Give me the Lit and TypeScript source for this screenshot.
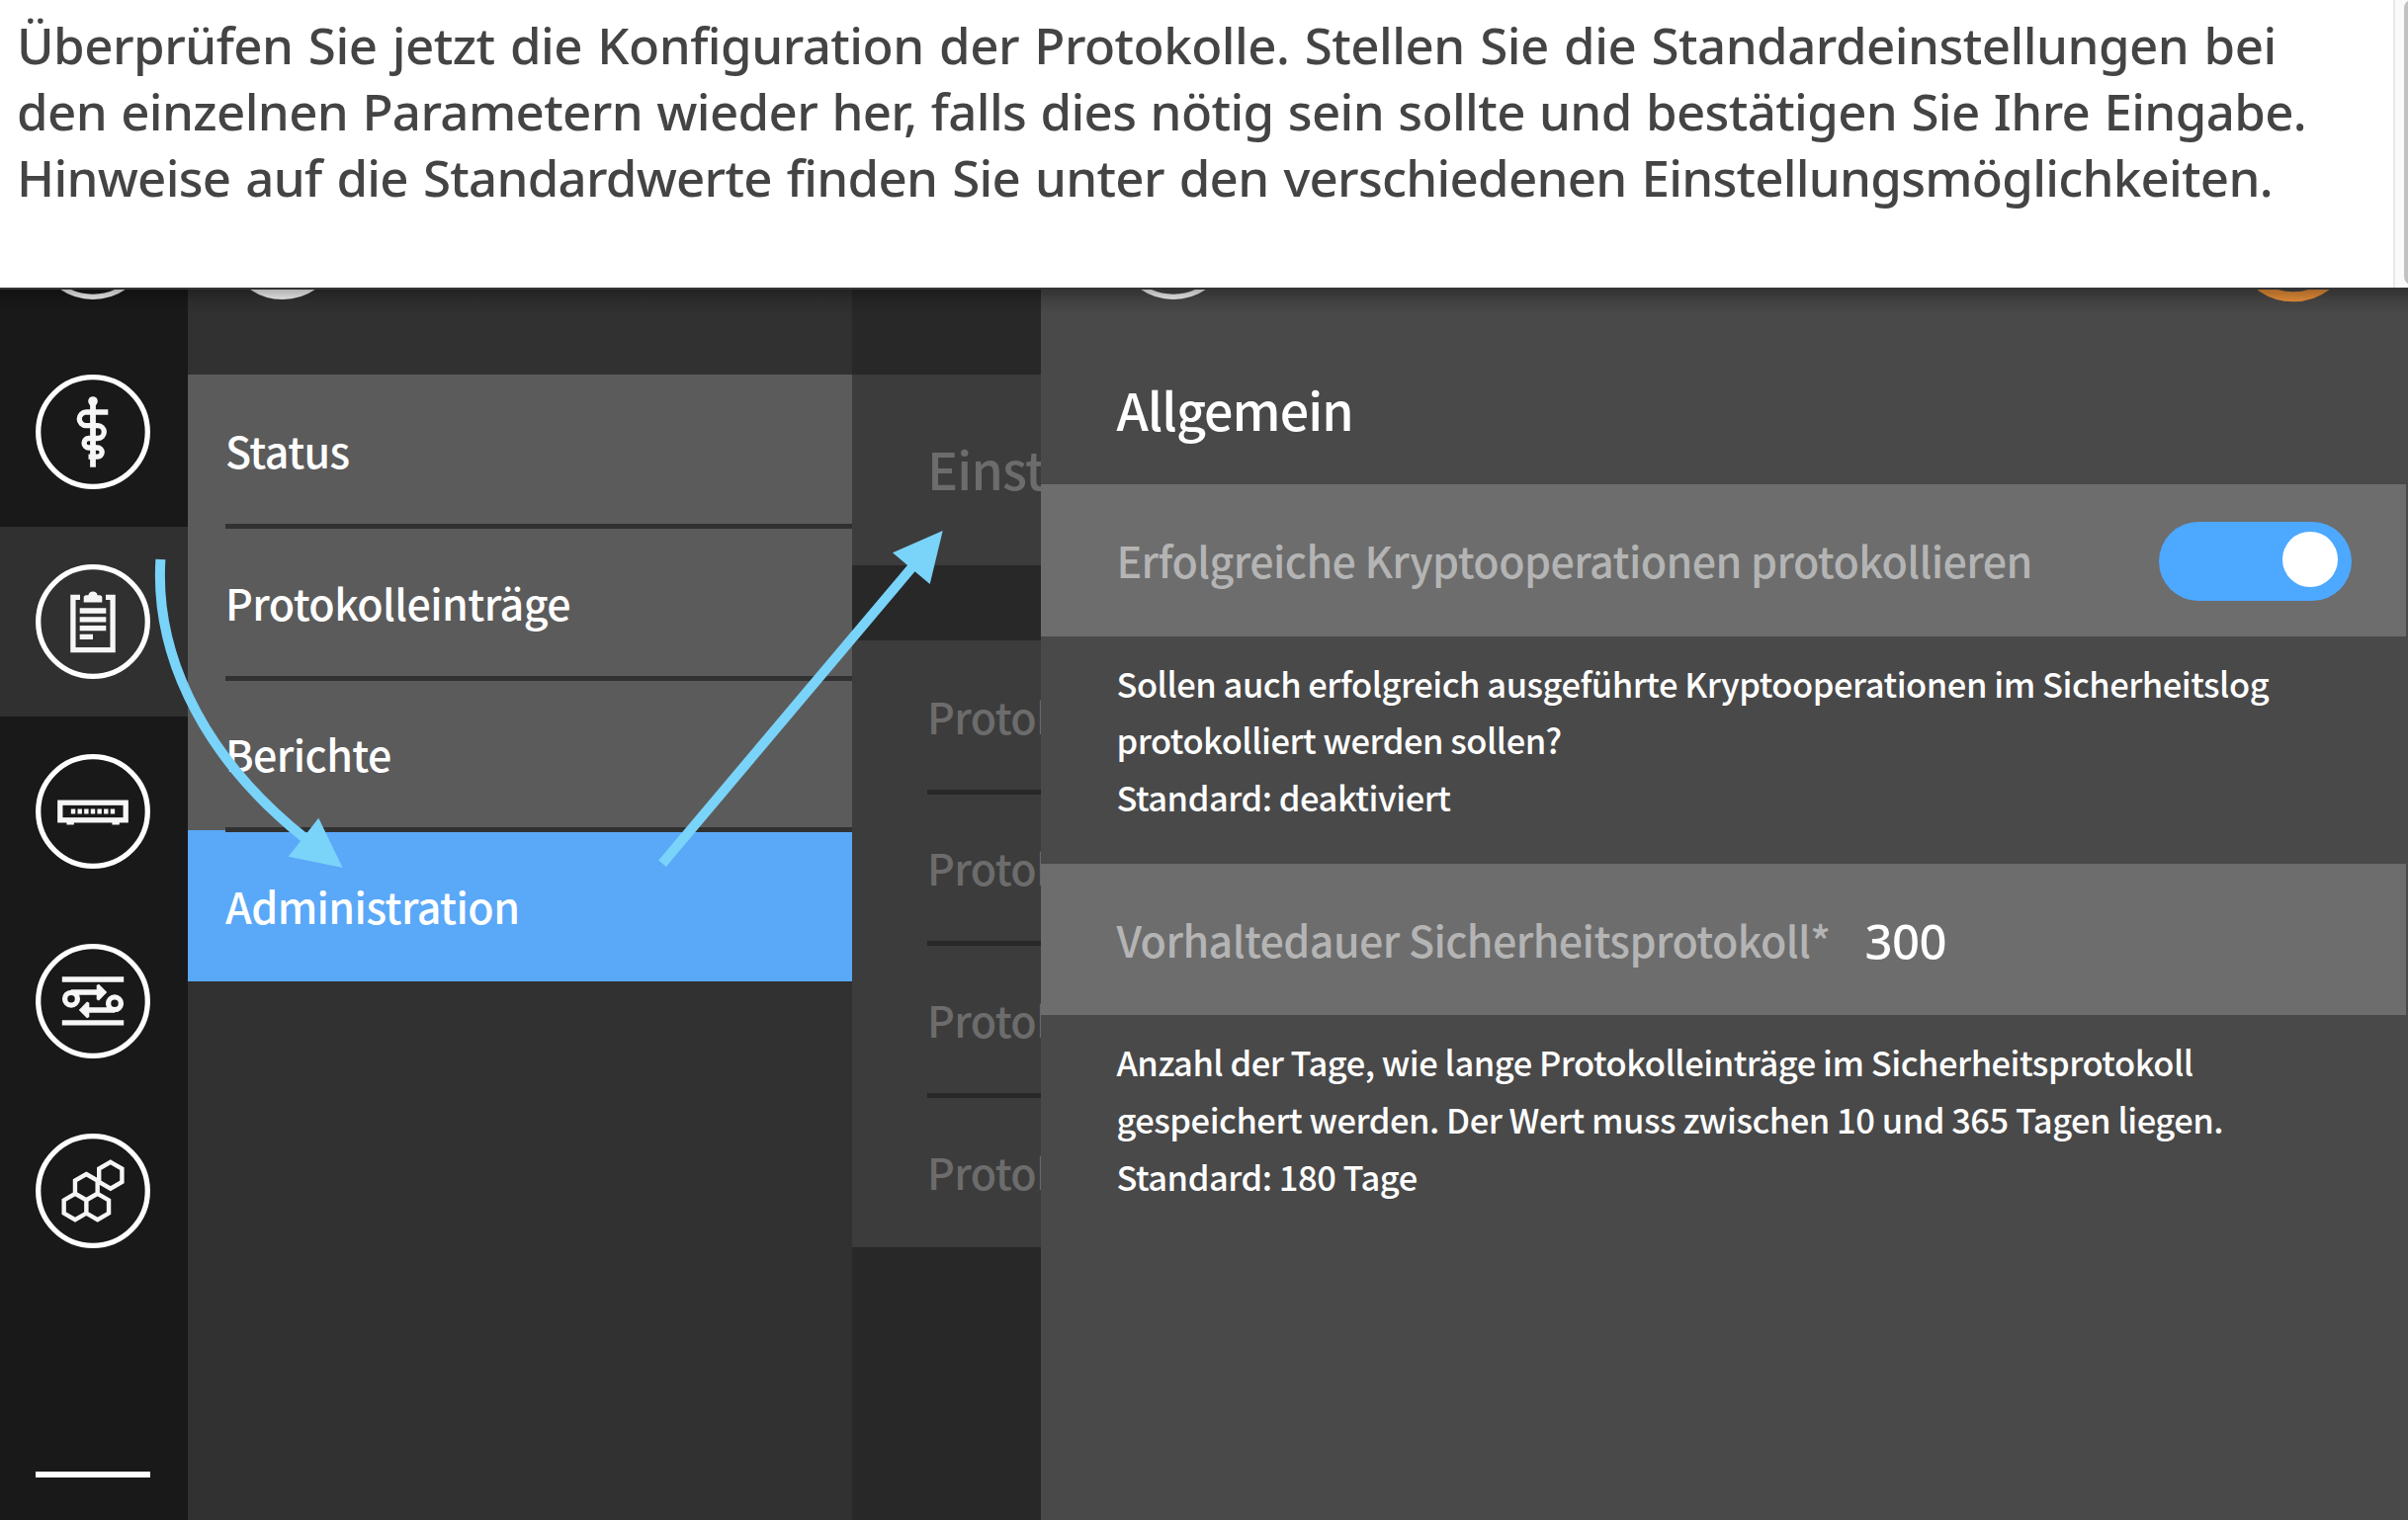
import { LitElement, html, svg, css, type TemplateResult, type SVGTemplateResult } from "lit";
import { customElement, property } from "lit/decorators.js";
import { classMap } from "lit/directives/class-map.js";

const hex = (cx: number, cy: number, r = 13.1): string => {
  const w = r * 0.866;
  return `M${cx} ${cy - r}l${w} ${r / 2}v${r}l${-w} ${r / 2}l${-w} ${-r / 2}v${-r}z`;
};

/* Glyphs are drawn around the centre of a 116px circle. */
const GLYPHS: Record<string, SVGTemplateResult> = {
  none: svg``,
  medical: svg`
    <circle class="fill" cx="0" cy="-31" r="4.8"></circle>
    <path class="fill" d="M-2.9-30H2.9V35.7H-2.9z"></path>
    <path class="line" d="M15.3-20H-6.9a6.85 6.85 0 0 0 0 13.7H4.9a6.4 6.4 0 0 1 0 12.8H-4.2a4.75 4.75 0 0 0 0 9.5H4.6a4.6 4.6 0 0 1 0 9.2H-4.5"></path>`,
  clipboard: svg`
    <path class="line" d="M-13-24.7H-20.1V28.7H20.1V-24.7H13"></path>
    <path class="fill" d="M-9.3-19.6V-25.2L-7.6-26.8H-4.6A4.7 4.7 0 0 1 4.6-26.8H7.6L9.3-25.2V-19.6z"></path>
    <path class="line" d="M-13.3-11H13.3M-13.3-2.2H13.3M-13.3 6.7H13.3M-13.3 15.3H0"></path>`,
  device: svg`
    <rect class="line" x="-33.2" y="-8.8" width="66.4" height="17.6"></rect>
    <path class="fill" d="M-26.6 10h7.4v3.6h-7.4zM19.4 10h7.4v3.6h-7.4z"></path>
    ${[-3, -2, -1, 0, 1, 2, 3].map((i) => svg`<rect class="fill" x=${i * 6.65 - 2.2} y="-2.5" width="4.4" height="5"></rect>`)}`,
  transfer: svg`
    <path class="line" d="M-31.2-22H31.2M-31.2 21.8H31.2M-22-9H8M22 9H-8"></path>
    <circle class="line" cx="-22" cy="-2.3" r="6.4"></circle>
    <circle class="line" cx="22" cy="2.3" r="6.4"></circle>
    <path class="fill" d="M3.7-16L6-17.2L14.2-9L6-.6L3.7-1.8zM-3.7 16L-6 17.2L-14.2 9L-6 .6L-3.7 1.8z"></path>`,
  hexagons: svg`
    <path class="line thin" d="${hex(17.8, -15.7, 13.4)}${hex(-6.7, -3.9)}${hex(-18, 16)}${hex(4.7, 16)}"></path>`,
};

@customElement("round-icon")
export class RoundIcon extends LitElement {
  @property() name = "none";
  @property() tone = "outline";

  static styles = css`
    :host { display: block; width: 116px; height: 116px; flex: none; }
    svg { display: block; overflow: visible; }
    .ring { fill: none; stroke: #fff; stroke-width: 5.3; }
    .ring.solid { fill: #fff; }
    .ring.orange { stroke: #f2953a; stroke-width: 10; }
    .fill { fill: #f6f6f6; }
    .line { fill: none; stroke: #f6f6f6; stroke-width: 5.3; }
    .thin { stroke-width: 4.4; }
  `;

  render() {
    return html`<svg width="116" height="116" viewBox="-58 -58 116 116">
      <circle class="ring ${this.tone}" r="55.3"></circle>${GLYPHS[this.name]}
    </svg>`;
  }
}

const NAV = ["none", "medical", "clipboard", "device", "transfer", "hexagons"];
const MENU = ["Status", "Protokolleinträge", "Berichte", "Administration"];
const PROTOCOLS = ["Protokoll", "Protokoll", "Protokoll", "Protokoll"];

@customElement("app-root")
export class AppRoot extends LitElement {
  static styles = css`
    :host {
      display: block; position: relative; width: 2436px; height: 1538px; overflow: hidden;
      font-family: "Noto Sans CJK SC", "Noto Sans", sans-serif; font-weight: 500; color: #fff;
    }
    .page { display: flex; flex-direction: column; height: 1538px; }

    .intro { display: flex; height: 291px; background: #fff; color: #444; }
    .copy {
      flex: 1; min-width: 0; padding: 12px 0 0 17px; white-space: nowrap;
      font: 500 51px/67px "Noto Sans", sans-serif;
    }
    .copy div:nth-child(1) { letter-spacing: -0.52px; word-spacing: 2.6px; }
    .copy div:nth-child(2) { letter-spacing: -0.63px; word-spacing: 1.6px; }
    .copy div:nth-child(3) { letter-spacing: -0.74px; word-spacing: 2.5px; }
    .track { flex: none; width: 15px; border-left: 2px solid #e8e8e8; background: #fafafa; padding-left: 8.5px; overflow: hidden; box-sizing: border-box; }
    .thumb { width: 16px; height: 288px; border-radius: 8px; background: #c1c1c1; }

    .stage {
      position: relative; flex: 1; min-height: 0; overflow: hidden; border-top: 2px solid #353537;
      display: grid; grid-template-columns: 190px 672px 191.4px minmax(0, 1fr);
    }
    .shade {
      position: absolute; left: 0; right: 0; top: 0; height: 26px;
      background: linear-gradient(rgba(0,0,0,.3), rgba(0,0,0,.1) 50%, rgba(0,0,0,0));
    }

    .rail { background: #191919; display: flex; flex-direction: column; overflow: hidden; height: 1245px; }
    .rail .slot { flex: none; height: 192px; display: flex; align-items: center; padding-left: 36px; }
    .rail .slot:first-child { margin-top: -144px; }
    .rail .on { background: #303030; }
    .rule { width: 116px; height: 6px; background: #fff; margin: 187.5px 0 0 36px; flex: none; }

    .top { height: 86px; display: flex; align-items: flex-end; justify-content: space-between; overflow: hidden; box-sizing: border-box; padding-bottom: 76px; }
    .side { background: #313131; }
    .side .top { padding-left: 38px; }
    .item { display: flex; flex-direction: column; height: 153.6px; background: #5b5b5b; padding-left: 38px; }
    .item span { flex: 1; min-height: 0; line-height: 152px; font-size: 43px; letter-spacing: -.6px; white-space: nowrap; }
    .item i { flex: none; height: 5px; margin-bottom: -2.5px; background: #313131; position: relative; z-index: 1; }
    .item.on { background: #5aa8f8; }

    .back { background: #282828; color: #6c6c6c; overflow: hidden; white-space: nowrap; }
    .back .head { height: 192.5px; line-height: 189px; padding-left: 76px; background: #3c3c3c; font-size: 52px; letter-spacing: -.85px; }
    .back .list { margin-top: 76.3px; }
    .back .item { background: #3c3c3c; padding-left: 76px; }
    .back .item i { background: #282828; }

    .form { background: #494949; }
    .form .top { padding-left: 76px; padding-right: 58px; }
    .title { height: 111px; line-height: 70px; padding-left: 76px; font-size: 52px; letter-spacing: -.95px; box-sizing: border-box; }
    .field {
      height: 153.5px; margin-right: 2px; padding-left: 76px; background: #6d6d6d; color: #b4b4b4;
      display: flex; align-items: center; font-size: 43px; letter-spacing: -.59px; line-height: 62px; white-space: nowrap;
    }
    .field .label { padding-bottom: 1.5px; }
    .hint { height: 230px; box-sizing: border-box; padding: 19px 0 0 76px; font-size: 34.5px; line-height: 57.8px; letter-spacing: -.49px; white-space: nowrap; }
    .switch { width: 195px; height: 80px; border-radius: 40px; background: #4da8ff; margin: 3px 55px 0 auto; box-sizing: border-box; padding: 10px 14px 0 0; display: flex; justify-content: flex-end; }
    .knob { width: 55.6px; height: 55.6px; border-radius: 50%; background: #fff; }
    .value { color: #fff; font: 500 49px/62px "Noto Sans", sans-serif; margin-left: 35px; padding-top: 3px; letter-spacing: -.5px; }

    .arrows { position: absolute; left: 0; top: 0; z-index: 5; pointer-events: none; }
    .arrows .shaft { fill: none; stroke: #7ad3f9; stroke-width: 10; }
    .arrows .tip { fill: #7ad3f9; }
  `;

  private item(label: string, last: boolean, on = false): TemplateResult {
    return html`<div class=${classMap({ item: true, on })}><span>${label}</span>${last ? "" : html`<i></i>`}</div>`;
  }

  render() {
    return html`
      <div class="page">
        <header class="intro">
          <div class="copy">
            <div>Überprüfen Sie jetzt die Konfiguration der Protokolle. Stellen Sie die Standardeinstellungen bei</div>
            <div>den einzelnen Parametern wieder her, falls dies nötig sein sollte und bestätigen Sie Ihre Eingabe.</div>
            <div>Hinweise auf die Standardwerte finden Sie unter den verschiedenen Einstellungsmöglichkeiten.</div>
          </div>
          <div class="track"><div class="thumb"></div></div>
        </header>
        <main class="stage">
          <nav class="rail">
            ${NAV.map((n) => html`<div class=${classMap({ slot: true, on: n === "clipboard" })}><round-icon name=${n}></round-icon></div>`)}
            <div class="rule"></div>
          </nav>
          <section class="side">
            <div class="top"><round-icon tone="solid"></round-icon></div>
            ${MENU.map((m, i) => this.item(m, i === MENU.length - 1, m === "Administration"))}
          </section>
          <section class="back">
            <div class="top"></div>
            <div class="head">Einstellungen</div>
            <div class="list">${PROTOCOLS.map((p, i) => this.item(p, i === PROTOCOLS.length - 1))}</div>
          </section>
          <section class="form">
            <div class="top"><round-icon></round-icon><round-icon tone="orange"></round-icon></div>
            <div class="title">Allgemein</div>
            <div class="field">
              <span class="label">Erfolgreiche Kryptooperationen protokollieren</span>
              <div class="switch"><div class="knob"></div></div>
            </div>
            <div class="hint">
              <div>Sollen auch erfolgreich ausgeführte Kryptooperationen im Sicherheitslog</div>
              <div>protokolliert werden sollen?</div>
              <div>Standard: deaktiviert</div>
            </div>
            <div class="field">
              <span class="label">Vorhaltedauer Sicherheitsprotokoll*</span>
              <span class="value">300</span>
            </div>
            <div class="hint">
              <div>Anzahl der Tage, wie lange Protokolleinträge im Sicherheitsprotokoll</div>
              <div>gespeichert werden. Der Wert muss zwischen 10 und 365 Tagen liegen.</div>
              <div>Standard: 180 Tage</div>
            </div>
          </section>
          <div class="shade"></div>
        </main>
      </div>
      <svg class="arrows" width="2436" height="1538" viewBox="0 0 2436 1538">
        <path class="shaft" d="M162.4 566C157 650 194 757 309 848.5"></path>
        <path class="tip" d="M322.3 827.7L346.7 878L291.7 866.7z"></path>
        <path class="shaft" d="M670 873.7L923 573.6"></path>
        <path class="tip" d="M953.7 537L903 559.3L940.7 591z"></path>
      </svg>
    `;
  }
}
